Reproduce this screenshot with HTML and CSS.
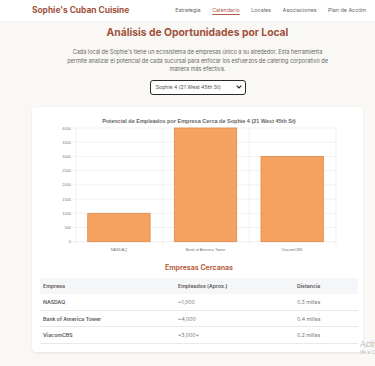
FILE: index.html
```html
<!DOCTYPE html>
<html lang="es">
<head>
<meta charset="utf-8">
<title>Sophie's Cuban Cuisine</title>
<link rel="stylesheet" href="styles.css">
</head>
<body>
<header class="topbar">
  <div class="logo">Sophie's Cuban Cuisine</div>
  <nav class="nav">
    <a>Estrategia</a>
    <a class="active">Calendario</a>
    <a>Locales</a>
    <a>Asociaciones</a>
    <a>Plan de Acción</a>
  </nav>
</header>
<main class="main">
  <h1 class="title">Análisis de Oportunidades por Local</h1>
  <p class="intro">Cada local de Sophie's tiene un ecosistema de empresas único a su alrededor. Esta herramienta permite analizar el potencial de cada sucursal para enfocar los esfuerzos de catering corporativo de manera más efectiva.</p>
  <div class="select-wrap">
    <div class="select">
      <span>Sophie 4 (21 West 45th St)</span>
      <svg class="chev" width="6" height="4" viewBox="0 0 6 4"><path d="M0.7 0.7 L3 3 L5.3 0.7" fill="none" stroke="#222" stroke-width="1.1"/></svg>
    </div>
  </div>
  <section class="card">
    <svg class="chart" width="318" height="145" viewBox="0 0 318 145">
      <text x="159" y="11" class="ctitle" text-anchor="middle">Potencial de Empleados por Empresa Cerca de Sophie 4 (21 West 45th St)</text>
      <g stroke="#e8e8e8" stroke-width="0.6">
        <line x1="33" y1="16" x2="296" y2="16"/>
        <line x1="33" y1="30.2" x2="296" y2="30.2"/>
        <line x1="33" y1="44.4" x2="296" y2="44.4"/>
        <line x1="33" y1="58.6" x2="296" y2="58.6"/>
        <line x1="33" y1="72.8" x2="296" y2="72.8"/>
        <line x1="33" y1="87.1" x2="296" y2="87.1"/>
        <line x1="33" y1="101.3" x2="296" y2="101.3"/>
        <line x1="33" y1="115.5" x2="296" y2="115.5"/>
        <line x1="33" y1="129.7" x2="296" y2="129.7"/>
        <line x1="36" y1="16" x2="36" y2="132.5"/>
        <line x1="122.7" y1="16" x2="122.7" y2="132.5"/>
        <line x1="209.3" y1="16" x2="209.3" y2="132.5"/>
        <line x1="296" y1="16" x2="296" y2="132.5"/>
      </g>
      <g class="ylab" text-anchor="end">
        <text x="31" y="17.6">4000</text>
        <text x="31" y="31.8">3500</text>
        <text x="31" y="46">3000</text>
        <text x="31" y="60.2">2500</text>
        <text x="31" y="74.4">2000</text>
        <text x="31" y="88.7">1500</text>
        <text x="31" y="102.9">1000</text>
        <text x="31" y="117.1">500</text>
        <text x="31" y="131.3">0</text>
      </g>
      <g fill="#f4a261" stroke="#e0894a" stroke-width="0.8">
        <rect x="47.7" y="101.3" width="62.4" height="28.4"/>
        <rect x="134.3" y="16" width="62.4" height="113.7"/>
        <rect x="221" y="44.4" width="62.4" height="85.3"/>
      </g>
      <g class="xlab" text-anchor="middle">
        <text x="79" y="138.5">NASDAQ</text>
        <text x="165.5" y="138.5">Bank of America Tower</text>
        <text x="252" y="138.5">ViacomCBS</text>
      </g>
    </svg>
    <h2 class="subtitle">Empresas Cercanas</h2>
    <table class="table">
      <thead>
        <tr><th class="c1">Empresa</th><th class="c2">Empleados (Aprox.)</th><th>Distancia</th></tr>
      </thead>
      <tbody>
        <tr><td class="name">NASDAQ</td><td>~1,000</td><td>0.3 millas</td></tr>
        <tr><td class="name">Bank of America Tower</td><td>~4,000</td><td>0.4 millas</td></tr>
        <tr><td class="name">ViacomCBS</td><td>~3,000+</td><td>0.2 millas</td></tr>
      </tbody>
    </table>
  </section>
</main>
<div class="watermark">
  <div class="wm1">Activar Windows</div>
  <div class="wm2">Ve a Configuración para activar Windows.</div>
</div>
</body>
</html>
```

FILE: styles.css
```css
* { box-sizing: border-box; }
html, body { margin: 0; padding: 0; }
body {
  background: #faf8f4;
  font-family: "Inter", "Liberation Sans", sans-serif;
  color: #444;
  width: 375px;
  height: 366px;
  overflow: hidden;
  position: relative;
}
.topbar {
  height: 21px;
  background: #ffffff;
  display: flex;
  align-items: center;
  justify-content: space-between;
  padding: 0 9px 1px 32px;
  box-shadow: 0 0.5px 1.5px rgba(0,0,0,0.06);
}
.logo {
  font-size: 8.4px;
  font-weight: 700;
  color: #a0503c;
}
.nav {
  display: flex;
  gap: 11.5px;
  font-size: 5.4px;
  color: #666;
}
.nav a.active {
  color: #b0604a;
  text-decoration: underline;
  text-underline-offset: 1.5px;
  text-decoration-thickness: 0.5px;
}
.main {
  display: flex;
  flex-direction: column;
  align-items: center;
  padding: 0 12px 0 32px;
}
.title {
  margin: 3px 0 0;
  font-size: 10.3px;
  line-height: 16px;
  font-weight: 700;
  color: #a0503c;
}
.intro {
  margin: 8px 0 0;
  width: 268px;
  text-align: center;
  font-size: 5.5px;
  line-height: 8.5px;
  color: #666;
}
.select-wrap {
  margin-top: 6px;
  display: flex;
  justify-content: center;
}
.select {
  width: 96px;
  height: 15px;
  border: 1px solid #2a2a2a;
  border-radius: 3px;
  background: #fff;
  display: flex;
  align-items: center;
  justify-content: space-between;
  padding: 0 3px 0 5px;
  font-size: 5.2px;
  color: #555;
}
.card {
  margin-top: 12px;
  width: 331px;
  height: 245px;
  background: #ffffff;
  border-radius: 4px;
  box-shadow: 0 1px 3px rgba(0,0,0,0.08);
  padding: 5px 5px 0 8px;
  display: flex;
  flex-direction: column;
  align-items: stretch;
}
.chart { display: block; }
.ctitle {
  font-size: 5.5px;
  font-weight: 700;
  fill: #666;
  font-family: "Liberation Sans", sans-serif;
}
.ylab text, .xlab text {
  font-size: 3.9px;
  fill: #777;
  font-family: "Liberation Sans", sans-serif;
}
.subtitle {
  margin: 5px 0 0;
  text-align: center;
  font-size: 7px;
  line-height: 11px;
  font-weight: 700;
  color: #b8623f;
}
.table {
  margin-top: 5px;
  width: 318px;
  border-collapse: collapse;
  font-size: 5.2px;
  color: #777;
}
.table th {
  background: #f5f6f8;
  font-weight: 600;
  color: #555;
  text-align: left;
  height: 16px;
  padding: 0 3px;
}
.table td {
  height: 16.7px;
  padding: 0 3px;
  border-bottom: 0.6px solid #e9e9e9;
}
.table td.name { font-weight: 600; color: #555; }
.table .c1 { width: 135px; }
.table .c2 { width: 119px; }
.watermark {
  position: absolute;
  left: 360px;
  top: 339px;
  white-space: nowrap;
  color: #b9b9b9;
  font-family: "Liberation Sans", sans-serif;
}
.wm1 { font-size: 8.5px; line-height: 10px; }
.wm2 { font-size: 5px; line-height: 7px; }
```
